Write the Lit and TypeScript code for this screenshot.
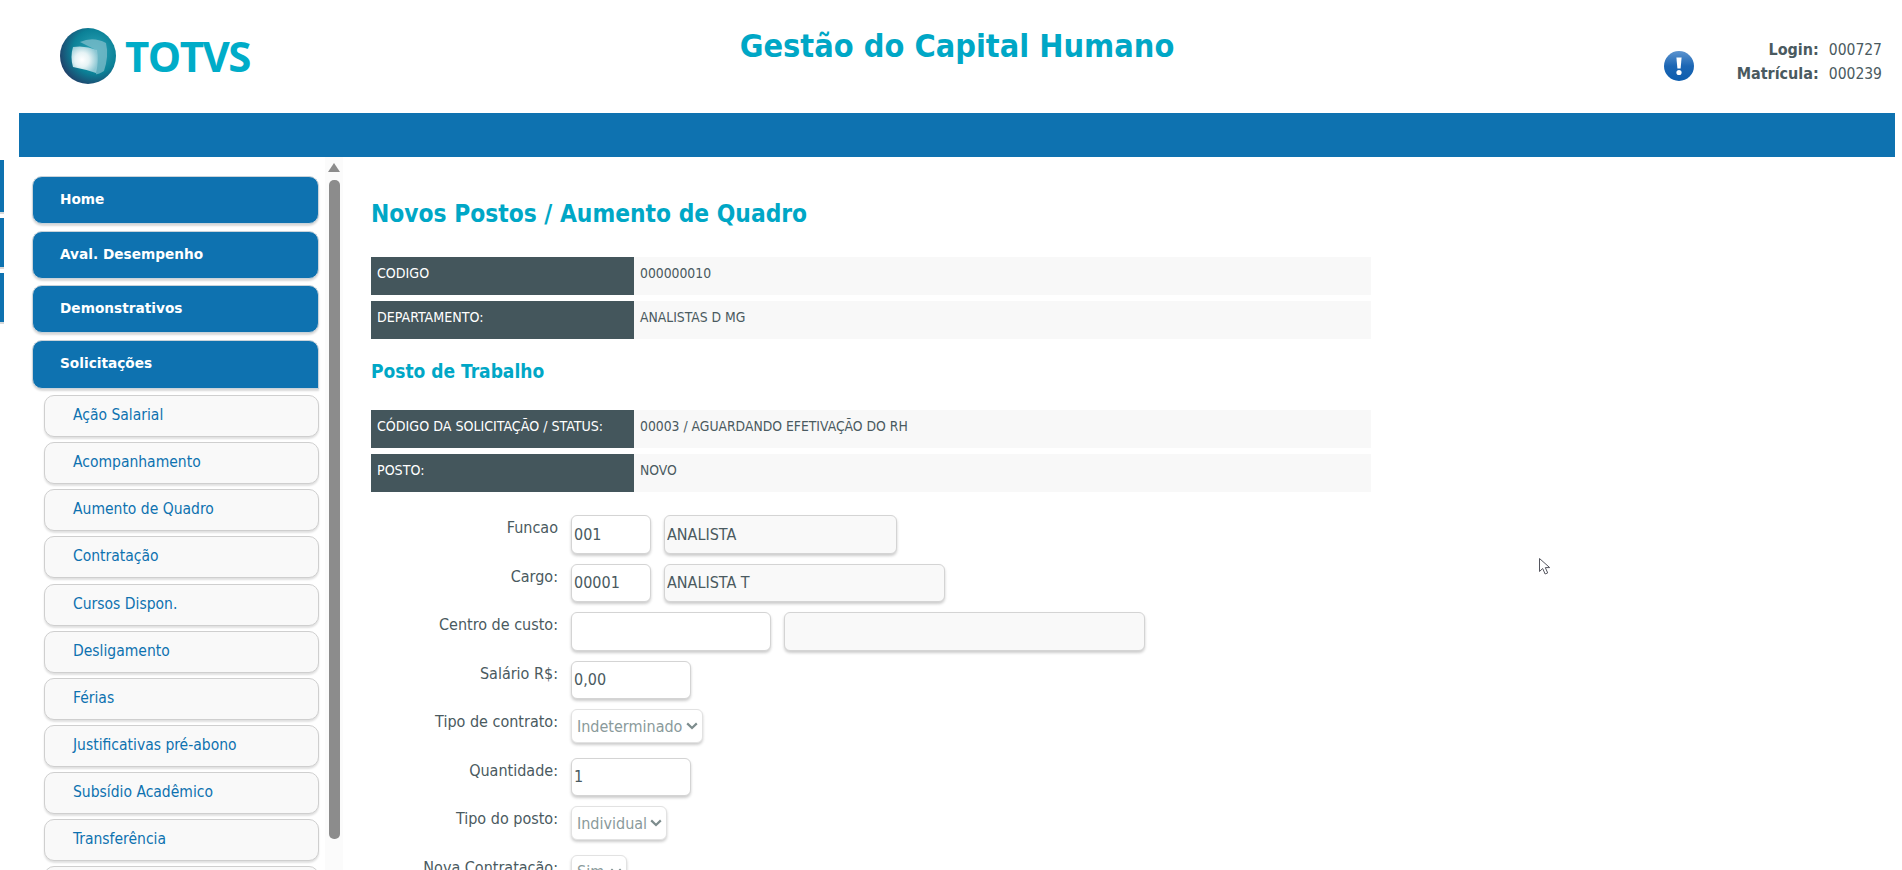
import { css, html, LitElement } from 'lit';
import { customElement } from 'lit/decorators.js';

const MAIN_MENU = ['Home', 'Aval. Desempenho', 'Demonstrativos', 'Solicitações'];
const SUB_MENU = [
  'Ação Salarial',
  'Acompanhamento',
  'Aumento de Quadro',
  'Contratação',
  'Cursos Dispon.',
  'Desligamento',
  'Férias',
  'Justificativas pré-abono',
  'Subsídio Acadêmico',
  'Transferência',
  'Treinamento',
];

const logo = html`<svg class="logo-mark" viewBox="0 0 56 56" width="56" height="56">
  <defs>
    <radialGradient id="globe" cx="0.62" cy="0.42" r="0.72">
      <stop offset="0" stop-color="#2ea6b8" />
      <stop offset="0.55" stop-color="#0b8197" />
      <stop offset="0.85" stop-color="#1d4a70" />
      <stop offset="1" stop-color="#2a2350" />
    </radialGradient>
    <radialGradient id="glow" cx="0.4" cy="0.5" r="0.6">
      <stop offset="0" stop-color="#ffffff" />
      <stop offset="0.45" stop-color="#e6f3f5" />
      <stop offset="1" stop-color="#8cc7d3" />
    </radialGradient>
  </defs>
  <circle cx="28" cy="28" r="28" fill="url(#globe)" />
  <path d="M20 14 Q33 8 46 15 Q49 28 44 43 Q37 47 36 46 L36 22 Z" fill="#7fbecb" opacity="0.75" />
  <path d="M13 19 Q25 17 37 22 Q39 33 36 45 Q24 41 13 39 Q10 29 13 19 Z" fill="url(#glow)" />
</svg>`;

const alertIcon = html`<svg viewBox="0 0 30 30" width="30" height="30">
  <defs>
    <linearGradient id="alert" x1="0" y1="0" x2="0" y2="1">
      <stop offset="0" stop-color="#5d94cf" />
      <stop offset="0.5" stop-color="#1c66b4" />
      <stop offset="1" stop-color="#0d5dae" />
    </linearGradient>
  </defs>
  <circle cx="15" cy="15" r="15" fill="url(#alert)" />
  <path d="M12.4 6.5h5.2l-1 11h-3.2z" fill="#fff" />
  <circle cx="15" cy="21.5" r="2.6" fill="#fff" />
</svg>`;

@customElement('app-root')
export class AppRoot extends LitElement {
  static styles = css`
    :host {
      display: block;
      width: 1902px;
      height: 870px;
      overflow: hidden;
      position: relative;
      background: #fff;
      font-family: 'DejaVu Sans Condensed', 'DejaVu Sans', Verdana, sans-serif;
      font-stretch: condensed;
      color: #4a5a60;
    }

    * {
      box-sizing: border-box;
    }

    /* Left edge strip */
    .edge {
      position: absolute;
      left: 0;
      top: 160px;
      width: 4px;
      display: flex;
      flex-direction: column;
      gap: 6px;
    }

    .edge span {
      display: block;
      background: #0e72b0;
      box-shadow: 0 2px 0 #d8d8d8;
    }

    .page {
      padding-left: 19px;
      padding-right: 7px;
    }

    /* Header */
    .header {
      height: 113px;
      display: grid;
      grid-template-columns: 1fr auto 1fr;
      position: relative;
    }

    .brand {
      display: flex;
      align-items: center;
      gap: 9px;
      padding: 0 0 1px 41px;
    }

    .brand-name {
      font-family: 'Open Sans', sans-serif;
      font-stretch: normal;
      font-weight: 700;
      font-size: 42px;
      letter-spacing: -1.5px;
      color: #00acc8;
      line-height: 1;
    }

    .app-title {
      margin: 0;
      padding-top: 26px;
      font-size: 32.2px;
      line-height: 40px;
      font-weight: 700;
      color: #00a7c6;
    }

    .user {
      display: flex;
      justify-content: flex-end;
      align-items: flex-start;
      padding-top: 38px;
      padding-right: 13px;
    }

    .alert {
      margin: 13px 43px 0 0;
    }

    .user-table {
      display: grid;
      grid-template-columns: auto auto;
      column-gap: 10px;
      font-size: 15.5px;
      line-height: 24px;
    }

    .user-table b {
      font-size: 16px;
      text-align: right;
    }

    .band {
      height: 44px;
      background: #0e72b0;
    }

    /* Body */
    .body {
      display: flex;
      height: 713px;
    }

    .side {
      width: 306px;
      padding: 19px 0 0 13px;
      display: flex;
      flex-direction: column;
      flex: none;
      overflow: hidden;
    }

    .main-item {
      width: 287px;
      height: 48px;
      flex: none;
      margin-bottom: 6.7px;
      padding: 14px 0 0 27px;
      background: #0e72b0;
      border: 1px solid #c9d3da;
      border-radius: 10px;
      box-shadow: 0 2px 2px rgba(0, 0, 0, 0.15);
      color: #fff;
      font-family: 'DejaVu Sans', Verdana, sans-serif;
      font-stretch: normal;
      font-size: 13.7px;
      line-height: 17px;
      font-weight: 700;
    }

    .main-item.open {
      height: 49px;
      margin-bottom: 6px;
      border-radius: 10px 10px 0 10px;
    }

    .sub-item {
      width: 275px;
      height: 42px;
      flex: none;
      margin: 0 0 5.15px 12px;
      padding: 11px 0 0 28px;
      background: #f9f9f9;
      border: 1px solid #cfcfcf;
      border-radius: 10px;
      box-shadow: 0 2px 2px rgba(0, 0, 0, 0.12);
      color: #0e72b0;
      font-size: 15.5px;
      line-height: 17px;
    }

    .scroll {
      width: 18px;
      flex: none;
      background: #fbfbfb;
      display: flex;
      flex-direction: column;
      align-items: center;
      padding-top: 6px;
    }

    .scroll-up {
      width: 0;
      height: 0;
      border-left: 6px solid transparent;
      border-right: 6px solid transparent;
      border-bottom: 9px solid #8c8c8c;
    }

    .scroll-thumb {
      width: 11px;
      height: 659px;
      margin-top: 8px;
      background: #8c8c8c;
      border-radius: 5px;
    }

    .content {
      padding: 0 0 0 28px;
      width: 1030px;
      flex: none;
    }

    h1 {
      margin: 0;
      padding-top: 42px;
      height: 100px;
      font-size: 24.3px;
      line-height: 30px;
      font-weight: 700;
      color: #00a7c6;
    }

    h2 {
      margin: 0;
      height: 65px;
      padding-top: 14px;
      font-size: 19px;
      line-height: 24px;
      font-weight: 700;
      color: #00a7c6;
    }

    .info-row {
      display: grid;
      grid-template-columns: 263px 1fr;
      width: 1000px;
      height: 38px;
      margin-bottom: 6px;
      font-size: 14.1px;
      line-height: 16px;
    }

    .info-row > div {
      padding: 8px 6px 0;
    }

    .info-label {
      background: #44565c;
      color: #fff;
    }

    .info-value {
      background: #f8f8f8;
      color: #4a5a60;
      font-size: 13.8px;
    }

    /* Form */
    .form {
      margin-top: 23px;
      padding-left: 1px;
      display: flex;
      flex-direction: column;
    }

    .field {
      display: grid;
      grid-template-columns: 186px auto;
      column-gap: 13px;
      justify-content: start;
      font-size: 16px;
      line-height: 20px;
    }

    .field label {
      text-align: right;
      padding-top: 3px;
    }

    .controls {
      display: flex;
      gap: 13px;
    }

    input,
    select {
      height: 38.5px;
      padding: 0 2px;
      border: 1px solid #d4d4d4;
      border-radius: 6px;
      box-shadow: 0 2px 3px rgba(0, 0, 0, 0.2);
      background: #fff;
      font-family: inherit;
      font-stretch: condensed;
      font-size: 16px;
      color: #4a5a60;
      outline: none;
    }

    input.ro {
      background: #f9f9f9;
    }

    select {
      appearance: none;
      height: 34px;
      padding: 0 0 0 5px;
      color: #8a9a9b;
      border-color: #e2e2e2;
      opacity: 1;
      background-image: url("data:image/svg+xml,%3Csvg xmlns='http://www.w3.org/2000/svg' width='12' height='8'%3E%3Cpath d='M1.2 1.4 6 6l4.8-4.6' fill='none' stroke='%237d8c8d' stroke-width='2.2'/%3E%3C/svg%3E");
      background-repeat: no-repeat;
      background-position: right 4px center;
    }

    .after-input {
      margin-bottom: 10px;
    }

    .after-select {
      margin-bottom: 14.5px;
    }

    .w-80 { width: 80px; }
    .w-120 { width: 120px; }
    .w-200 { width: 200px; }
    .w-233 { width: 233px; }
    .w-281 { width: 281px; }
    .w-361 { width: 361px; }
    .w-132 { width: 132px; }
    .w-96 { width: 96px; }
    .w-56 { width: 56px; }

    .pointer {
      position: absolute;
      left: 1538px;
      top: 557px;
    }
  `;

  private infoRow(label: string, value: string) {
    return html`<div class="info-row">
      <div class="info-label">${label}</div>
      <div class="info-value">${value}</div>
    </div>`;
  }

  render() {
    return html`
      <div class="edge">
        <span style="height:52px"></span>
        <span style="height:49px"></span>
        <span style="height:49px"></span>
      </div>
      <div class="page">
        <header class="header">
          <div class="brand">${logo}<span class="brand-name">TOTVS</span></div>
          <h3 class="app-title">Gestão do Capital Humano</h3>
          <div class="user">
            <div class="alert">${alertIcon}</div>
            <div class="user-table">
              <b>Login:</b><span>000727</span>
              <b>Matrícula:</b><span>000239</span>
            </div>
          </div>
        </header>
        <div class="band"></div>
        <div class="body">
          <nav class="side">
            ${MAIN_MENU.map(
              (m, i) =>
                html`<div class="main-item ${i === MAIN_MENU.length - 1 ? 'open' : ''}">${m}</div>`
            )}
            ${SUB_MENU.map((s) => html`<div class="sub-item">${s}</div>`)}
          </nav>
          <div class="scroll">
            <div class="scroll-up"></div>
            <div class="scroll-thumb"></div>
          </div>
          <main class="content">
            <h1>Novos Postos / Aumento de Quadro</h1>
            ${this.infoRow('CODIGO', '000000010')}
            ${this.infoRow('DEPARTAMENTO:', 'ANALISTAS D MG')}
            <h2>Posto de Trabalho</h2>
            ${this.infoRow('CÓDIGO DA SOLICITAÇÃO / STATUS:', '00003 / AGUARDANDO EFETIVAÇÃO DO RH')}
            ${this.infoRow('POSTO:', 'NOVO')}
            <form class="form">
              <div class="field after-input">
                <label>Funcao</label>
                <div class="controls">
                  <input class="w-80" value="001" />
                  <input class="w-233 ro" value="ANALISTA" />
                </div>
              </div>
              <div class="field after-input">
                <label>Cargo:</label>
                <div class="controls">
                  <input class="w-80" value="00001" />
                  <input class="w-281 ro" value="ANALISTA T" />
                </div>
              </div>
              <div class="field after-input">
                <label>Centro de custo:</label>
                <div class="controls">
                  <input class="w-200" value="" />
                  <input class="w-361 ro" value="" />
                </div>
              </div>
              <div class="field after-input">
                <label>Salário R$:</label>
                <div class="controls"><input class="w-120" value="0,00" /></div>
              </div>
              <div class="field after-select">
                <label>Tipo de contrato:</label>
                <div class="controls">
                  <select class="w-132" disabled><option>Indeterminado</option></select>
                </div>
              </div>
              <div class="field after-input">
                <label>Quantidade:</label>
                <div class="controls"><input class="w-120" value="1" /></div>
              </div>
              <div class="field after-select">
                <label>Tipo do posto:</label>
                <div class="controls">
                  <select class="w-96" disabled><option>Individual</option></select>
                </div>
              </div>
              <div class="field">
                <label>Nova Contratação:</label>
                <div class="controls">
                  <select class="w-56" disabled><option>Sim</option></select>
                </div>
              </div>
            </form>
          </main>
        </div>
      </div>
      <svg class="pointer" width="14" height="20" viewBox="0 0 14 20">
        <path
          d="M1.5 1.5v13l3.2-3 2.4 5.5 2.6-1.1-2.4-5.3h4.4z"
          fill="#fff"
          stroke="#55565f"
          stroke-width="1"
        />
      </svg>
    `;
  }
}
